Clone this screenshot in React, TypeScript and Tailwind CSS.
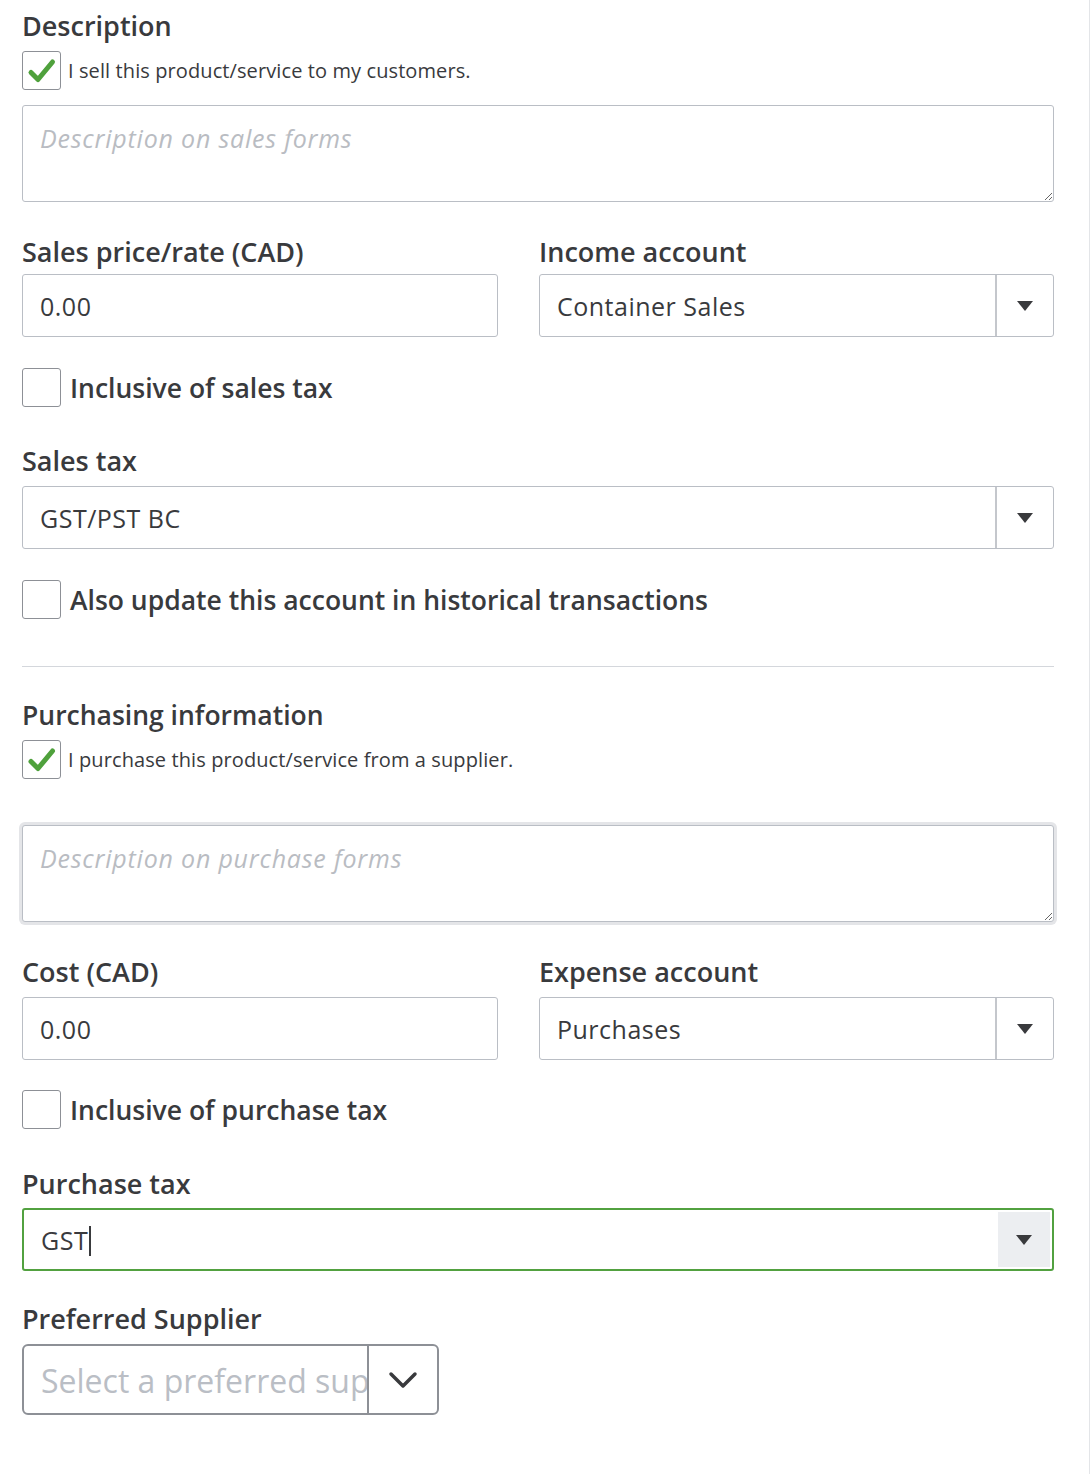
import React from "react";

const Check = () => (
  <div className="w-[39px] h-[39px] shrink-0 rounded-[3px] border border-[#8d9096] bg-white flex items-center justify-center">
    <svg width="31" height="27" viewBox="0 0 31 27">
      <path d="M5 15.5 L12 22.5 L26.5 5" fill="none" stroke="#4fa13c" strokeWidth="5" strokeLinecap="round" strokeLinejoin="round" />
    </svg>
  </div>
);

const Box = () => (
  <div className="w-[39px] h-[39px] shrink-0 rounded-[3px] border border-[#8d9096] bg-white" />
);

const Tri = () => (
  <svg width="16" height="10" viewBox="0 0 16 10">
    <path d="M0 0 H16 L8 10 Z" fill="#393a3d" />
  </svg>
);

const Select = ({ text, w }: { text: string; w: string }) => (
  <div className={`${w} h-[63px] flex rounded-[3px] border border-[#babec5] bg-white`}>
    <div className="flex-1 flex items-center pl-[17px] pt-[2px] text-[25px] tracking-[0.5px] text-[#393a3d]">{text}</div>
    <div className="w-[58px] border-l-2 border-[#c4c7cc] flex items-center justify-center">
      <Tri />
    </div>
  </div>
);

const Input = ({ text }: { text: string }) => (
  <div className="h-[63px] rounded-[3px] border border-[#babec5] flex items-center pl-[17px] pt-[2px] text-[25px] tracking-[0.5px]">{text}</div>
);

const Label = ({ children }: { children: React.ReactNode }) => (
  <div className="text-[27px] leading-[32px] font-semibold text-[#393a3d]">{children}</div>
);

const BoldCheckRow = ({ text }: { text: string }) => (
  <div className="flex items-center gap-[9px]">
    <Box />
    <span className="text-[26.5px] leading-[36px] font-semibold">{text}</span>
  </div>
);

const taClass =
  "block w-[1032px] h-[97px] rounded-[3px] border border-[#babec5] bg-white px-[17px] pt-[16px] text-[25px] leading-[32px] tracking-[0.8px] outline-none resize-y placeholder:italic placeholder:text-[#b9bcc2]";

export default function App() {
  return (
    <div className="flex w-[1090px] min-h-[1474px] bg-white font-['Open_Sans',sans-serif] text-[#393a3d]">
      <div className="flex-1 pl-[22px] pr-[32px] pt-[10px]">
        <Label>Description</Label>
        <div className="mt-[9px] flex items-center gap-[7px]">
          <Check />
          <span className="text-[20px] tracking-[0.1px]">I sell this product/service to my customers.</span>
        </div>
        <textarea className={`mt-[15px] ${taClass}`} placeholder="Description on sales forms" />

        <div className="mt-[34px] flex gap-[41px]">
          <div className="w-[476px]">
            <Label>Sales price/rate (CAD)</Label>
            <div className="mt-[6px]"><Input text="0.00" /></div>
          </div>
          <div className="w-[515px]">
            <Label>Income account</Label>
            <div className="mt-[6px]"><Select text="Container Sales" w="w-[515px]" /></div>
          </div>
        </div>

        <div className="mt-[31px]"><BoldCheckRow text="Inclusive of sales tax" /></div>

        <div className="mt-[38px]"><Label>Sales tax</Label></div>
        <div className="mt-[9px]"><Select text="GST/PST BC" w="w-[1032px]" /></div>

        <div className="mt-[31px]"><BoldCheckRow text="Also update this account in historical transactions" /></div>

        <div className="mt-[47px] h-px w-[1032px] bg-[#d4d7dc]" />

        <div className="mt-[32px] text-[26.5px] leading-[32px] font-semibold">Purchasing information</div>
        <div className="mt-[9px] flex items-center gap-[7px]">
          <Check />
          <span className="text-[20px] tracking-[0.1px]">I purchase this product/service from a supplier.</span>
        </div>
        <div className="mt-[43px] -ml-[3px] w-[1038px] rounded-[6px] bg-[#e4e5e8] p-[3px]">
          <textarea className={taClass} placeholder="Description on purchase forms" />
        </div>

        <div className="mt-[31px] flex gap-[41px]">
          <div className="w-[476px]">
            <Label>Cost (CAD)</Label>
            <div className="mt-[9px]"><Input text="0.00" /></div>
          </div>
          <div className="w-[515px]">
            <Label>Expense account</Label>
            <div className="mt-[9px]"><Select text="Purchases" w="w-[515px]" /></div>
          </div>
        </div>

        <div className="mt-[30px]"><BoldCheckRow text="Inclusive of purchase tax" /></div>

        <div className="mt-[39px]"><Label>Purchase tax</Label></div>
        <div className="mt-[8px] w-[1032px] h-[63px] flex rounded-[3px] border-2 border-[#52a140] bg-white">
          <div className="flex-1 flex items-center pl-[17px] pt-[2px] text-[25px] tracking-[0.5px]">
            GST<span className="inline-block w-[2px] h-[30px] bg-[#393a3d] ml-[1px]" />
          </div>
          <div className="w-[52px] my-[2px] mr-[2px] bg-[#eceef1] flex items-center justify-center">
            <Tri />
          </div>
        </div>

        <div className="mt-[32px]"><Label>Preferred Supplier</Label></div>
        <div className="mt-[9px] w-[417px] h-[71px] flex rounded-[6px] border-2 border-[#8d9096] bg-white overflow-hidden">
          <div className="flex-1 overflow-hidden whitespace-nowrap flex items-center pl-[17px] pt-[2px] text-[32px] text-[#babec5]">
            Select a preferred sup
          </div>
          <div className="w-[70px] border-l-2 border-[#8d9096] flex items-center justify-center">
            <svg width="30" height="18" viewBox="0 0 30 18">
              <path d="M3 3 L15 15 L27 3" fill="none" stroke="#393a3d" strokeWidth="3.5" strokeLinecap="round" strokeLinejoin="round" />
            </svg>
          </div>
        </div>
      </div>
      <div className="w-[4px] border-l border-[#e3e5e8] bg-[#f4f5f8]" />
    </div>
  );
}
